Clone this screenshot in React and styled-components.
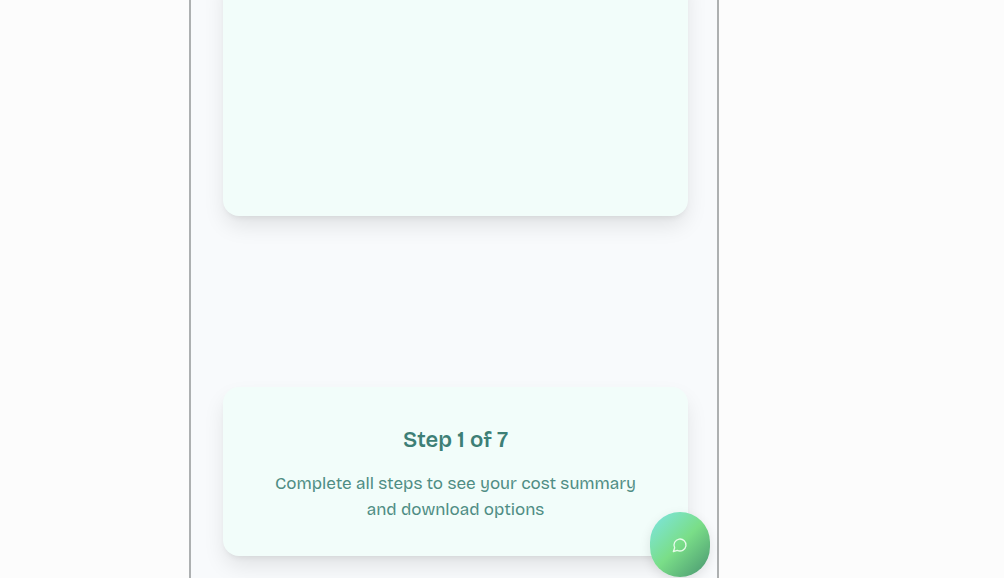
import React from "react";
import styled, { createGlobalStyle } from "styled-components";

const GlobalStyle = createGlobalStyle`
  * { box-sizing: border-box; }
  body {
    margin: 0;
    background: #fcfcfc;
    font-family: "Bricolage Grotesque", Inter, sans-serif;
    overflow: hidden;
  }
`;

const Page = styled.div`
  display: grid;
  grid-template-columns: 189fr 530fr 285fr;
  min-height: 100vh;
`;

const Panel = styled.main`
  grid-column: 2;
  position: relative;
  display: flex;
  flex-direction: column;
  gap: 171px;
  padding: 0 29px 22px 32px;
  background: #f8fafc;
  border: solid #adb0b1;
  border-width: 0 2px;
`;

const Card = styled.section`
  background: #f2fdfa;
  border-radius: 16px;
  box-shadow: 0 11px 22px -2px rgba(0, 0, 0, 0.1), 0 4px 7px -4px rgba(0, 0, 0, 0.1);
`;

const PreviewCard = styled(Card)`
  height: 248px;
  margin-top: -32px;
`;

const StepCard = styled(Card)`
  display: flex;
  flex-direction: column;
  gap: 11px;
  padding: 33px 44px;
  text-align: center;
`;

const Title = styled.h2`
  margin: 0;
  color: #3d7f76;
  font-size: 22px;
  font-weight: 600;
  line-height: 40px;
`;

const Description = styled.p`
  margin: 0;
  color: #4f8d84;
  font-size: 17px;
  font-weight: 400;
  line-height: 26px;
`;

const ChatButton = styled.button`
  position: absolute;
  right: 7px;
  bottom: 1px;
  display: flex;
  align-items: center;
  justify-content: center;
  width: 60px;
  height: 65px;
  padding: 0;
  border: 0;
  border-radius: 30px;
  color: #e6fbe9;
  background: linear-gradient(135deg, #7de5e6 0%, #7ade88 50%, #479370 100%);
  box-shadow: 0 4px 12px rgba(0, 0, 0, 0.1);
  cursor: pointer;
`;

const ChatIcon = () => (
  <svg width="16" height="16" viewBox="0 0 24 24" fill="none" stroke="currentColor" strokeWidth="2" strokeLinecap="round" strokeLinejoin="round" aria-hidden="true">
    <path d="M7.9 20A9 9 0 1 0 4 16.1L2 22Z" />
  </svg>
);

export default function App() {
  return (
    <>
      <GlobalStyle />
      <Page>
        <Panel>
          <PreviewCard />
          <StepCard>
            <Title>Step 1 of 7</Title>
            <Description>Complete all steps to see your cost summary and download options</Description>
          </StepCard>
          <ChatButton type="button" aria-label="Open chat">
            <ChatIcon />
          </ChatButton>
        </Panel>
      </Page>
    </>
  );
}
